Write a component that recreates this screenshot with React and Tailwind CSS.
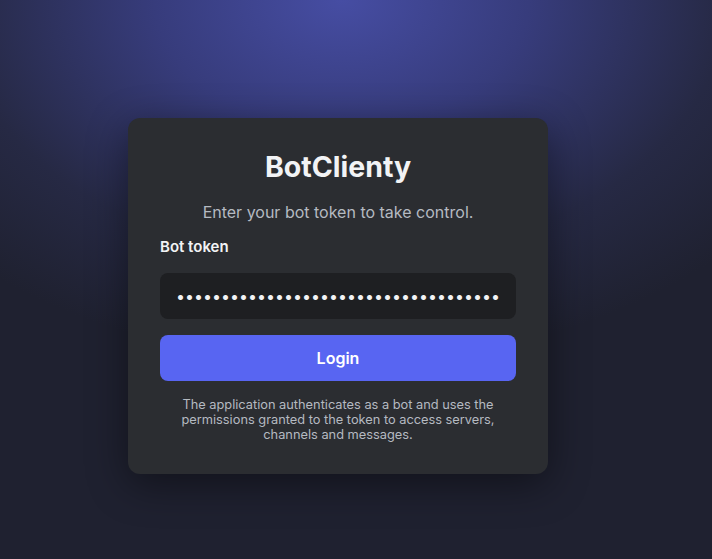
import { useState } from 'react';

const App = () => {
  const [token, setToken] = useState('x'.repeat(36));

  return (
    <div
      className="min-h-[559px] w-full flex items-center justify-center pr-9 pt-[33px] bg-[#1f2130] bg-[radial-gradient(ellipse_75%_65%_at_48%_0%,#464da3_0%,#373c7c_35%,#262944_72%,#1f2130_100%)]"
      style={{ fontFamily: 'Inter, "Noto Sans", sans-serif' }}
    >
      <div className="w-[420px] bg-[#2b2d31] rounded-xl p-8 shadow-[0_10px_40px_rgba(0,0,0,0.45)] flex flex-col">
        <h1 className="text-[28.5px] leading-[34px] font-bold text-[#f2f3f5] text-center">BotClienty</h1>
        <p className="mt-4 text-base leading-6 text-[#b5bac1] text-center">Enter your bot token to take control.</p>

        <label className="mt-[13px] text-[15px] leading-5 font-semibold text-[#f2f3f5]">Bot token</label>
        <input
          type="password"
          value={token}
          onChange={(e) => setToken(e.target.value)}
          className="mt-4 h-[46px] w-full rounded-lg bg-[#1e1f22] px-4 text-base text-[#f2f3f5] outline-none"
        />

        <button className="mt-4 h-[46px] w-full rounded-lg bg-[#5865f2] text-white text-base font-semibold">
          Login
        </button>

        <p className="mt-4 text-[12.8px] leading-[15px] text-[#b5bac1] text-center px-4">
          The application authenticates as a bot and uses the permissions granted to the token to access servers, channels and messages.
        </p>
      </div>
    </div>
  );
};

export default App;
